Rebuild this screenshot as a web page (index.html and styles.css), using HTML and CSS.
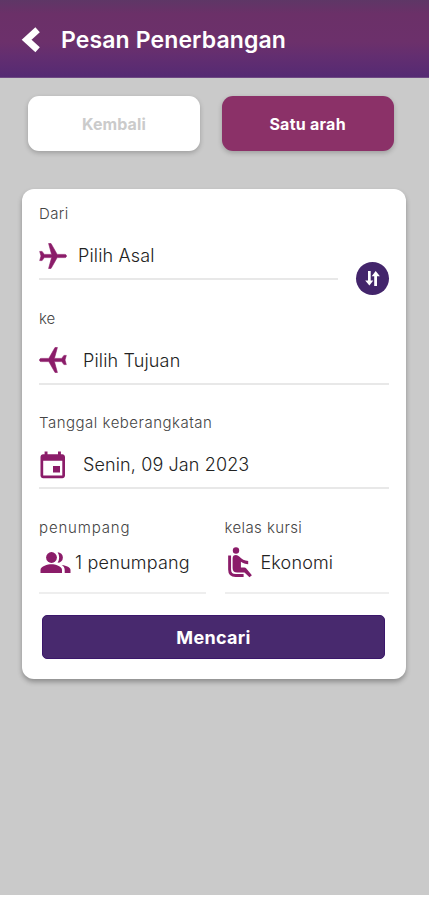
FILE: index.html
```html
<!DOCTYPE html>
<html lang="id">
<head>
<meta charset="utf-8">
<meta name="viewport" content="width=device-width, initial-scale=1">
<title>Pesan Penerbangan</title>
<link rel="stylesheet" href="styles.css">
</head>
<body>
<header class="topbar">
  <svg class="back" viewBox="0 0 18 26"><path d="M16.600 2.800 5.600 12.800 16.600 22.800" fill="none" stroke="#fff" stroke-width="6.600"/></svg>
  <h1 class="title">Pesan Penerbangan</h1>
</header>
<main class="page">
  <div class="tabs">
    <button class="tab tab-back">Kembali</button>
    <button class="tab tab-active">Satu arah</button>
  </div>
  <section class="card">
    <div class="origin">
      <div class="field">
        <div class="label l-dari">Dari</div>
        <div class="value"><svg class="icon plane" viewBox="0 0 28 28"><path d="M27.500 14c0-1-.8-1.600-1.800-1.600h-7.500L12 1.500H9.600l3 10.900H5.300L3.100 9.400H.7L2 14 .7 18.600h2.400l2.200-3h7.300l-3 10.900H12l6.200-10.900h7.500c1 0 1.800-.6 1.800-1.600z"/></svg><span class="v-asal">Pilih Asal</span></div>
      </div>
      <button class="swap" aria-label="Tukar"><svg viewBox="0 0 33 33"><path d="M12 9h2.700v9.500h2.600L13.400 23.500 9.200 18.500H12zM18.200 24V14.200h-2.500l4-5.100 4.200 5.100h-2.900V24z" fill="#fff"/></svg></button>
    </div>
    <div class="field">
      <div class="label l-ke">ke</div>
      <div class="value"><svg class="icon plane" viewBox="0 0 28 28"><path transform="matrix(-1 0 0 1 28 0)" d="M27.500 14c0-1-.8-1.600-1.800-1.600h-7.500L12 1.500H9.600l3 10.900H5.300L3.100 9.400H.7L2 14 .7 18.600h2.400l2.200-3h7.300l-3 10.900H12l6.200-10.900h7.500c1 0 1.800-.6 1.800-1.600z"/></svg><span class="v-tujuan">Pilih Tujuan</span></div>
    </div>
    <div class="field">
      <div class="label l-tanggal">Tanggal keberangkatan</div>
      <div class="value"><svg class="icon" viewBox="0 0 28 28"><path d="M21 15h-7v6.500h7zM19 .5v2.700H8.500V.5H5.600v2.700H4.200c-1.600 0-2.700 1.200-2.700 2.700v18.700c0 1.500 1.200 2.700 2.700 2.700h19.100c1.500 0 2.700-1.200 2.700-2.700V5.900c0-1.500-1.200-2.700-2.700-2.700h-1.400V.5zm4.300 24.100H4.200V9.700h19.100z" fill="#8b1c69"/></svg><span class="v-date">Senin, 09 Jan 2023</span></div>
    </div>
    <div class="pair">
      <div class="field short">
        <div class="label l-pen">penumpang</div>
        <div class="value"><svg class="people" viewBox="0 0 32 24"><g fill="#8b1c69"><circle cx="12.500" cy="6.500" r="5.400"/><path d="M1.500 22v-3c0-3.900 7.300-5.700 11-5.700S23 15.100 23 19v3zM18.600 1.200a5.300 5.300 0 1 1 0 10.600c2.100-3 2.100-7.500 0-10.600zM22.800 14c4.900.6 8.700 2.300 8.700 5v3h-5.800v-3c0-2.200-1.100-3.800-2.900-5z"/></g></svg><span class="v-one">1 penumpang</span></div>
      </div>
      <div class="field short">
        <div class="label l-kelas">kelas kursi</div>
        <div class="value"><svg class="seat" viewBox="0 0 28 32"><circle cx="11" cy="3.500" r="3.200" fill="#8b1c69"/><path d="M4.600 8.500V22.500q0 6 6 6h8" fill="none" stroke="#8b1c69" stroke-width="2.900"/><path d="M7.600 11.500q0-3.400 3.400-3.400 1.800 0 3.200 1.500c2.500 2.700 5.300 4.300 9 4.500v3.100c-2.700-.1-5.200-1-7.300-2.400v5.700h3.400q1.200 0 2 .9l5.600 6.800-2.400 2-5-4.700h-7.300q-4.600 0-4.600-4.600z" fill="#8b1c69"/></svg><span class="v-eko">Ekonomi</span></div>
      </div>
    </div>
    <button class="search">Mencari</button>
  </section>
</main>
</body>
</html>
```

FILE: styles.css
```css
* { box-sizing: border-box; }
body { margin: 0; min-height: 900px; background: #fff; font-family: Inter, "Open Sans", sans-serif; color: #222; }
button { border: 0; padding: 0; font-family: inherit; }
svg { display: block; flex: none; }
.topbar { height: 78px; display: flex; align-items: center; padding: 2px 0 0 20px; background: linear-gradient(#5e3766 0, #6b3068 14px, #6c306b 42px, #632e70 56px, #552a73 77px, #876994 78px); }
.back { width: 20px; height: 26px; margin-right: 21px; margin-top: -1px; overflow: visible; }
.title { margin: 0; font-size: 23px; line-height: 30px; font-weight: 600; color: #fff; white-space: nowrap; letter-spacing: .12px; }
.page { height: 817px; background: #cacaca; padding: 18px 23.500px 0 22px; }
.tabs { display: flex; gap: 22px; padding: 0 12px 0 6px; }
.tab { flex: 1; height: 55px; border-radius: 11px; font-size: 16px; font-weight: 700; box-shadow: 0 2px 5px rgba(0,0,0,.22); padding-top: 1px; }
.tab-back { background: #fff; color: #cbcbcb; letter-spacing: .1px; }
.tab-active { background: #8b3168; color: #fff; letter-spacing: .25px; }
.card { margin-top: 37.500px; height: 490.500px; background: #fff; border-radius: 12px; padding: 15.500px 17px 0; box-shadow: 0 3px 5px rgba(0,0,0,.3); }
.origin { display: grid; grid-template-columns: 299px 33px; justify-content: space-between; align-items: end; }
.field { height: 76px; margin-bottom: 28.700px; border-bottom: 2px solid #e8e8e8; }
.label { font-size: 15px; line-height: 20px; font-weight: 350; color: #444; white-space: nowrap; }
.l-dari { letter-spacing: .4px; }
.l-tanggal { letter-spacing: .5px; }
.l-pen { letter-spacing: .85px; }
.l-kelas { letter-spacing: .4px; }
.value { display: flex; align-items: center; height: 24px; margin-top: 19.500px; font-size: 18px; font-weight: 350; white-space: nowrap; }
.icon { width: 28px; height: 28px; margin-right: 16px; }
.plane { fill: #8b1c69; stroke: #8b1c69; stroke-width: .6; }
.v-asal { margin-left: -5px; letter-spacing: .15px; }
.v-tujuan { letter-spacing: .15px; }
.v-date { letter-spacing: .12px; }
.v-one { letter-spacing: .2px; }
.v-eko { letter-spacing: .15px; }
.swap { width: 33px; height: 33px; border-radius: 50%; background: #43256b; margin-bottom: 14px; }
.pair { display: grid; grid-template-columns: 167px 164px; justify-content: space-between; }
.short { margin-bottom: 21px; border-color: #eee; }
.short .value { margin-top: 12.500px; }
.people { width: 32px; height: 24px; margin-right: 4px; }
.seat { width: 28px; height: 32px; margin-right: 8px; }
.search { display: block; width: 343px; height: 44px; margin-left: 3px; border-radius: 5px; background: #48296e; border: 1px solid #3b176b; color: #fff; font-size: 18px; font-weight: 700; letter-spacing: .3px; }
```
